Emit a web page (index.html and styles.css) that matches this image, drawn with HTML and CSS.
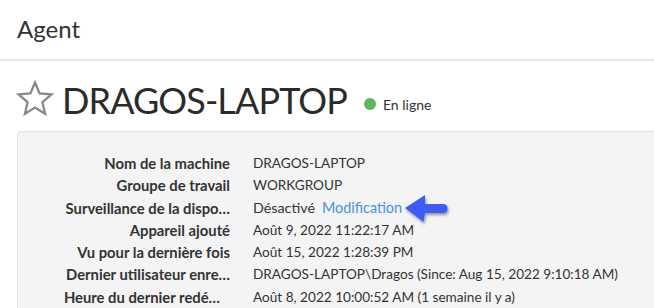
FILE: index.html
```html
<!DOCTYPE html>
<html lang="fr">
<head>
<meta charset="utf-8">
<title>Agent</title>
<link rel="stylesheet" href="styles.css">
</head>
<body>
<header class="page-header">
  <h1 class="page-title">Agent</h1>
</header>
<main class="content">
  <div class="device-head">
    <svg class="star" viewBox="0 0 38 38" width="38" height="38" aria-hidden="true">
      <path d="M19 2.5 L23.6 13.4 L35.4 14.4 L26.4 22.2 L29.1 33.8 L19 27.6 L8.9 33.8 L11.6 22.2 L2.6 14.4 L14.4 13.4 Z" fill="none" stroke="#888" stroke-width="2.3" stroke-linejoin="miter"/>
    </svg>
    <h2 class="device-name">DRAGOS-LAPTOP</h2>
    <span class="status"><span class="dot"></span>En ligne</span>
  </div>
  <section class="card">
    <dl class="props">
      <dt>Nom de la machine</dt><dd>DRAGOS-LAPTOP</dd>
      <dt>Groupe de travail</dt><dd>WORKGROUP</dd>
      <dt>Surveillance de la dispo…</dt>
      <dd><span class="muted">Désactivé</span><span class="link-wrap"><a class="link" href="#">Modification</a><svg class="arrow" viewBox="0 0 56 40" width="56" height="40" aria-hidden="true">
          <defs>
            <filter id="sh" x="-30%" y="-30%" width="160%" height="170%">
              <feDropShadow dx="1" dy="2" stdDeviation="1.4" flood-color="#000" flood-opacity="0.4"/>
            </filter>
          </defs>
          <path filter="url(#sh)" d="M5 18 L25 5 L25 14 L43 14 Q47.5 14 47.5 18.5 Q47.5 23 43 23 L25 23 L23.5 32 Z" fill="#3f5cf7"/>
        </svg></span>
      </dd>
      <dt>Appareil ajouté</dt><dd>Août 9, 2022 11:22:17 AM</dd>
      <dt>Vu pour la dernière fois</dt><dd>Août 15, 2022 1:28:39 PM</dd>
      <dt>Dernier utilisateur enre…</dt><dd>DRAGOS-LAPTOP\Dragos (Since: Aug 15, 2022 9:10:18 AM)</dd>
      <dt class="short">Heure du dernier redé…</dt><dd>Août 8, 2022 10:00:52 AM (1 semaine il y a)</dd>
    </dl>
  </section>
</main>
</body>
</html>
```
FILE: styles.css
```css
* { box-sizing: border-box; }
html, body { margin: 0; padding: 0; background: #fff; overflow: hidden; }
body {
  font-family: "Lato", "Noto Sans", sans-serif;
  color: #333;
  width: 654px;
  height: 308px;
}
.page-header {
  height: 61px;
  border-bottom: 2px solid #e8e8e8;
  padding: 0 17px 2px;
  display: flex;
  align-items: center;
}
.page-title {
  margin: 0;
  font-weight: 400;
  font-size: 24px;
  color: #333;
}
.content { padding: 12px 0 0 16px; }
.device-head {
  display: flex;
  align-items: center;
  height: 52px;
}
.star { flex: none; }
.device-name {
  margin: 0 0 0 8px;
  font-weight: 400;
  font-size: 36px;
  letter-spacing: -0.9px;
  color: #2b2b2b;
  line-height: 1;
  padding-top: 2px;
}
.status {
  display: inline-flex;
  align-items: center;
  margin-left: 17px;
  margin-top: 10px;
  font-size: 14px;
  color: #333;
}
.dot {
  width: 12px; height: 12px;
  border-radius: 50%;
  background: #5cb85c;
  margin-right: 7px;
}
.card {
  margin: 6px 0 0 1px;
  background: #f4f4f4;
  border: 1px solid #e3e3e3;
  border-right: none;
  border-bottom: none;
  border-radius: 4px 0 0 0;
  height: 200px;
  padding: 20px 0 0 0;
}
.props {
  margin: 0;
  display: grid;
  grid-template-columns: 212px 1fr;
  column-gap: 23px;
  line-height: 22.3px;
}
.props dt {
  text-align: right;
  font-weight: 700;
  font-size: 14.8px;
  color: #333;
  white-space: nowrap;
}
.props dt.short { padding-right: 10px; }
.props dd { margin: 0; font-size: 13.6px; color: #333; white-space: nowrap; }
.muted { font-size: 14.3px; }
.link-wrap { position: relative; margin-left: 7px; }
.link { color: #4a90e2; text-decoration: none; font-size: 14.4px; }
.arrow { position: absolute; left: calc(100% - 2px); top: -10px; }
```
